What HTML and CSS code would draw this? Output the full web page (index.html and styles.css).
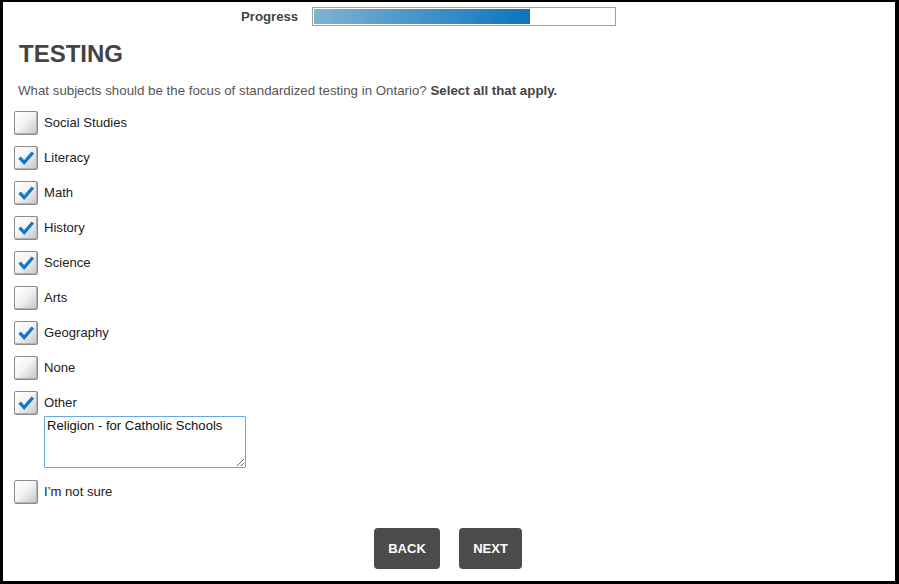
FILE: index.html
```html
<!DOCTYPE html>
<html>
<head>
<meta charset="utf-8">
<link rel="stylesheet" href="styles.css">
</head>
<body>
<div class="frame">
  <div class="progress">
    <span class="progress-label">Progress</span>
    <div class="bar"><div class="fill" style="width:72%"></div></div>
  </div>
  <h1 class="title">TESTING</h1>
  <p class="question">What subjects should be the focus of standardized testing in Ontario? <b>Select all that apply.</b></p>
  <div class="options">
    <div class="opt"><span class="box"></span><span class="lbl">Social Studies</span></div>
    <div class="opt"><span class="box on"><svg viewBox="0 0 24 24"><path d="M5 11.5 L10 17 L19.5 6" /></svg></span><span class="lbl">Literacy</span></div>
    <div class="opt"><span class="box on"><svg viewBox="0 0 24 24"><path d="M5 11.5 L10 17 L19.5 6" /></svg></span><span class="lbl">Math</span></div>
    <div class="opt"><span class="box on"><svg viewBox="0 0 24 24"><path d="M5 11.5 L10 17 L19.5 6" /></svg></span><span class="lbl">History</span></div>
    <div class="opt"><span class="box on"><svg viewBox="0 0 24 24"><path d="M5 11.5 L10 17 L19.5 6" /></svg></span><span class="lbl">Science</span></div>
    <div class="opt"><span class="box"></span><span class="lbl">Arts</span></div>
    <div class="opt"><span class="box on"><svg viewBox="0 0 24 24"><path d="M5 11.5 L10 17 L19.5 6" /></svg></span><span class="lbl">Geography</span></div>
    <div class="opt"><span class="box"></span><span class="lbl">None</span></div>
    <div class="opt"><span class="box on"><svg viewBox="0 0 24 24"><path d="M5 11.5 L10 17 L19.5 6" /></svg></span><span class="lbl">Other</span></div>
    <textarea class="other-text">Religion - for Catholic Schools</textarea>
    <div class="opt"><span class="box"></span><span class="lbl">I’m not sure</span></div>
  </div>
  <div class="buttons">
    <button class="btn back">BACK</button>
    <button class="btn next">NEXT</button>
  </div>
</div>
</body>
</html>
```
FILE: styles.css
```css
html, body {
  margin: 0;
  padding: 0;
  background: #000;
}
.frame {
  box-sizing: border-box;
  width: 899px;
  height: 584px;
  background: #fff;
  border-style: solid;
  border-color: #000;
  border-width: 2px 4px 3px 3px;
  font-family: "Liberation Sans", Arial, sans-serif;
  color: #222;
  display: flex;
  flex-direction: column;
}
.progress {
  display: flex;
  align-items: center;
  padding: 5px 0 0 238px;
  height: 18px;
}
.progress-label {
  font-size: 13.2px;
  font-weight: bold;
  color: #444;
  width: 71px;
}
.bar {
  box-sizing: border-box;
  width: 304px;
  height: 19px;
  border: 1px solid #a0a0a0;
  padding: 1px;
  background: #fff;
}
.fill {
  height: 100%;
  background: linear-gradient(to right, #7fb2d2, #0a75bf);
}
.title {
  margin: 15px 0 0 16px;
  font-size: 24px;
  line-height: 28px;
  font-weight: bold;
  color: #444;
}
.question {
  margin: 15px 0 0 15px;
  font-size: 13.3px;
  line-height: 16px;
  color: #555;
}
.question b {
  color: #444;
}
.options {
  display: flex;
  flex-direction: column;
  gap: 11px;
  margin: 12px 0 0 11px;
}
.opt {
  display: flex;
  align-items: center;
  height: 24px;
}
.box {
  box-sizing: border-box;
  width: 24px;
  height: 24px;
  border: 1px solid #8c8c8c;
  border-radius: 2px;
  background: linear-gradient(135deg, #ffffff 0%, #f4f4f4 45%, #c4c4c4 100%);
  box-shadow: inset -1px -1px 0 #b0b0b0;
  display: flex;
  align-items: center;
  justify-content: center;
  flex: none;
}
.box svg {
  width: 22px;
  height: 22px;
}
.box path {
  fill: none;
  stroke: #1577c8;
  stroke-width: 3.6;
  stroke-linecap: butt;
  stroke-linejoin: miter;
}
.lbl {
  margin-left: 6px;
  font-size: 13.1px;
  color: #222;
  position: relative;
  top: -1px;
}
.other-text {
  box-sizing: border-box;
  margin: -10px 0 1px 30px;
  width: 202px;
  height: 52px;
  border: 1px solid #6aa7e6;
  border-radius: 1px;
  padding: 1px 2px;
  font-family: "Liberation Sans", Arial, sans-serif;
  font-size: 13.1px;
  line-height: 15px;
  color: #111;
  resize: both;
  outline: none;
}
.buttons {
  display: flex;
  justify-content: center;
  gap: 19px;
  margin-top: 24px;
  padding-right: 2px;
}
.btn {
  height: 41px;
  border: none;
  border-radius: 4px;
  background: #4b4b4b;
  color: #fff;
  font-family: "Liberation Sans", Arial, sans-serif;
  font-weight: bold;
  font-size: 13px;
  padding: 0;
}
.back { width: 66px; }
.next { width: 63px; }
```
